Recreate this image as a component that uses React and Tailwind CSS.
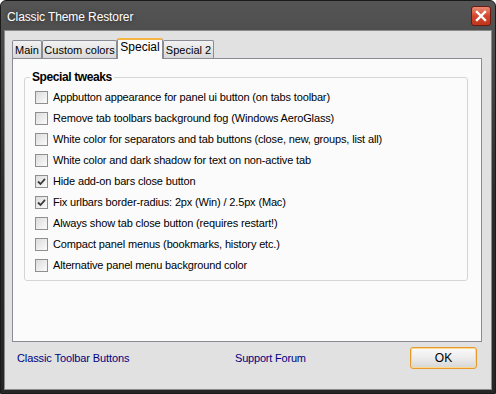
import { useState } from 'react';

const tabs = [
  { name: 'Main', w: 'w-[30px]' },
  { name: 'Custom colors', w: 'w-[75px]' },
  { name: 'Special', w: 'w-[46px]' },
  { name: 'Special 2', w: 'w-[51px]' },
];

const tweaks = [
  { label: 'Appbutton appearance for panel ui button (on tabs toolbar)', checked: false },
  { label: 'Remove tab toolbars background fog (Windows AeroGlass)', checked: false },
  { label: 'White color for separators and tab buttons (close, new, groups, list all)', checked: false },
  { label: 'White color and dark shadow for text on non-active tab', checked: false },
  { label: 'Hide add-on bars close button', checked: true },
  { label: 'Fix urlbars border-radius: 2px (Win) / 2.5px (Mac)', checked: true },
  { label: 'Always show tab close button (requires restart!)', checked: false },
  { label: 'Compact panel menus (bookmarks, history etc.)', checked: false },
  { label: 'Alternative panel menu background color', checked: false },
];

const CheckBox = ({ checked }) => (
  <span className="w-[13px] h-[13px] shrink-0 border border-[#8e8f8f] bg-gradient-to-br from-[#dcdcdc] to-[#fbfbfb] flex items-center justify-center">
    {checked && (
      <svg width="9" height="9" viewBox="0 0 9 9">
        <path d="M1 4.5 L3.5 7 L8 1.8" fill="none" stroke="#3c3c3c" strokeWidth="1.8" />
      </svg>
    )}
  </span>
);

const App = () => {
  const [items, setItems] = useState(tweaks);

  const toggle = (i) =>
    setItems(items.map((it, j) => (j === i ? { ...it, checked: !it.checked } : it)));

  return (
    <div
      className="w-[496px] h-[394px] flex flex-col bg-gradient-to-b from-[#555555] via-[#2c2c2c] to-[#262626] rounded-t-[6px] border border-[#1a1a1a] overflow-hidden"
      style={{ fontFamily: '"Liberation Sans", Arial, sans-serif' }}
    >
      {/* Title bar */}
      <div className="h-[29px] shrink-0 flex items-center justify-between pl-[6px] pr-[4px]">
        <span className="text-white text-[12px] mt-[2px] tracking-[-0.1px] [text-shadow:0_0_4px_rgba(0,0,0,0.6)]">Classic Theme Restorer</span>
        <button className="w-[20px] h-[20px] mt-[1px] rounded-[3px] border border-[#6a1a10] bg-gradient-to-b from-[#e98a73] via-[#d1462c] to-[#c0361c] flex items-center justify-center">
          <svg width="12" height="12" viewBox="0 0 12 12">
            <path d="M2 2 L10 10 M10 2 L2 10" stroke="white" strokeWidth="2.4" strokeLinecap="square" />
          </svg>
        </button>
      </div>

      {/* Body */}
      <div className="flex-1 mx-[3px] mb-[3px] bg-[#e1e1e1] border border-[#8a8a8a] flex flex-col px-[7px] pt-[6px]">
        {/* Tabs */}
        <div className="flex items-end h-[21px] relative z-10">
          {tabs.map((t) => {
            const active = t.name === 'Special';
            return (
              <div
                key={t.name}
                className={
                  (active
                    ? 'h-[21px] -mb-[1px] bg-[#fbfbfb] border border-[#898c95] border-b-0 border-t-2 border-t-[#f5b542] leading-[15px] text-[12px] '
                    : 'h-[18px] bg-gradient-to-b from-[#f2f2f2] to-[#d8d8d8] border border-[#898c95] border-b-0 leading-[18px] text-[11px] ') +
                  t.w +
                  ' rounded-t-[2px] text-black text-center shrink-0'
                }
              >
                {t.name}
              </div>
            );
          })}
        </div>

        {/* Panel */}
        <div className="h-[284px] w-[470px] bg-[#fbfbfb] border border-[#898c95] pt-[11px] pl-[11px] pr-[13px]">
          <fieldset className="border border-[#d5d5d5] rounded-[3px] px-[10px] pb-[4px] pt-[3px]">
            <legend className="-ml-[5px] px-[2px] text-[12px] font-bold text-black leading-[14px] tracking-[-0.4px]">Special tweaks</legend>
            <div className="flex flex-col">
              {items.map((it, i) => (
                <label
                  key={it.label}
                  className="h-[21px] flex items-center gap-[5px] text-[11px] text-black tracking-[-0.15px]"
                  onClick={() => toggle(i)}
                >
                  <CheckBox checked={it.checked} />
                  <span>{it.label}</span>
                </label>
              ))}
            </div>
          </fieldset>
        </div>

        {/* Footer */}
        <div className="flex items-center h-[32px] pl-[5px] pr-[7px]">
          <a className="text-[11px] text-[#00007f] w-[218px] tracking-[-0.1px]">Classic Toolbar Buttons</a>
          <a className="text-[11px] text-[#00007f] tracking-[-0.2px]">Support Forum</a>
          <button className="ml-auto w-[67px] h-[22px] rounded-[3px] border border-[#e89a2c] bg-gradient-to-b from-[#fbfbfb] via-[#ececec] to-[#d6d6d6] shadow-[inset_0_0_0_1px_#fbd98f] text-[12px] text-black">
            OK
          </button>
        </div>
      </div>
    </div>
  );
};

export default App;
